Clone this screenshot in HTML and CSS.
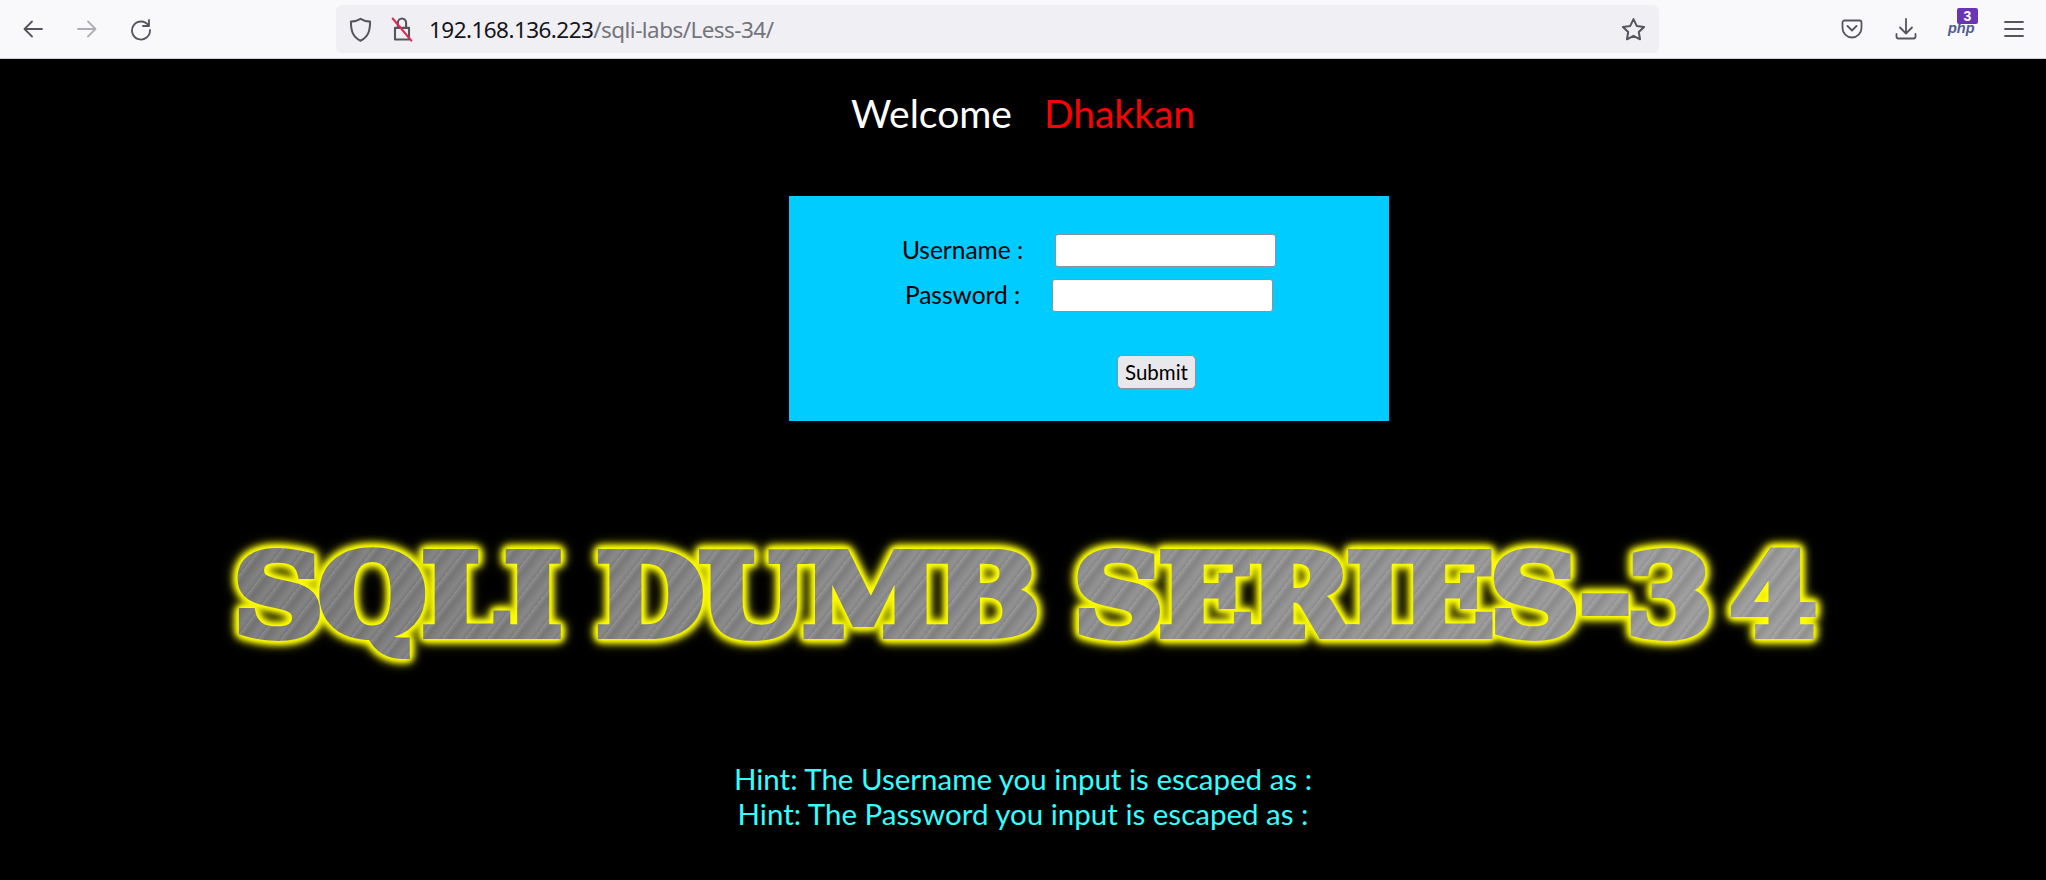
FILE: index.html
```html
<!DOCTYPE html>
<html lang="en">
<head>
  <meta charset="UTF-8">
  <title>Less-34</title>
  <link rel="stylesheet" href="styles.css">
</head>
<body>

  <!-- Browser toolbar -->
  <header class="toolbar">
    <div class="nav-buttons">
      <svg class="icon" viewBox="0 0 24 24"><path d="M21 12H4M11 4.500L3.500 12l7.500 7.500"/></svg>
      <svg class="icon icon-off" viewBox="0 0 24 24"><path d="M3 12h17M13 4.500l7.500 7.500-7.500 7.500"/></svg>
      <svg class="icon" viewBox="0 0 24 24"><path d="M19.500 8.500A9 9 0 1 0 21 13M20 3v6h-6"/></svg>
    </div>
    <div class="url-bar">
      <svg class="icon icon-shield" viewBox="0 0 24 24"><path d="M12 2.500c3 1.800 5.500 2.500 8.500 2.500 0 8-1.500 13.500-8.500 17C5 18.500 3.500 13 3.500 5 6.500 5 9 4.300 12 2.500z"/></svg>
      <svg class="icon icon-lock" viewBox="0 0 24 24"><path d="M6 11h12v10H6zM8.500 11V6.500a3.500 3.500 0 0 1 7 0V11"/><path class="lock-slash" d="M4 3l16 19"/></svg>
      <span class="url"><span class="url-host">192.168.136.223</span>/sqli-labs/Less-34/</span>
      <svg class="icon icon-star" viewBox="0 0 24 24"><path d="M12 2.800l2.900 6 6.500.9-4.700 4.500 1.100 6.500-5.800-3.100-5.800 3.100 1.100-6.500-4.700-4.500 6.500-.9z"/></svg>
    </div>
    <div class="tool-buttons">
      <svg class="icon" viewBox="0 0 24 24"><path d="M4.500 3.500h15a2 2 0 0 1 2 2V11a9.500 9.500 0 0 1-19 0V5.500a2 2 0 0 1 2-2z"/><path d="M7.500 9l4.500 4.500L16.500 9"/></svg>
      <svg class="icon" viewBox="0 0 24 24"><path d="M12 2v14M6 10.500l6 6 6-6M2.500 17v2.500a2 2 0 0 0 2 2h15a2 2 0 0 0 2-2V17"/></svg>
      <div class="php-ext">
        <span class="php-word">php</span>
        <span class="php-badge">3</span>
      </div>
      <svg class="icon" viewBox="0 0 24 24"><path d="M3 5h18M3 12h18M3 19h18"/></svg>
    </div>
  </header>

  <main class="page">
    <div class="welcome">Welcome <span class="name">Dhakkan</span></div>

    <form class="login-box" onsubmit="return false">
      <div class="form-row">
        <label for="uname">Username :</label>
        <input id="uname" type="text">
      </div>
      <div class="form-row form-row-pass">
        <label for="passwd">Password :</label>
        <input id="passwd" type="password">
      </div>
      <div class="submit-row">
        <button type="submit">Submit</button>
      </div>
    </form>

    <div class="banner"><span class="banner-text">SQLI DUMB SERIES-3<span class="banner-last">4</span></span></div>

    <div class="hints">
      <div>Hint: The Username you input is escaped as :</div>
      <div>Hint: The Password you input is escaped as :</div>
    </div>
  </main>

</body>
</html>
```

FILE: styles.css
```css
body {
  margin: 0;
  height: 880px;
  overflow: hidden;
  background-color: #000;
  font-family: 'Lato', 'Noto Sans', sans-serif;
}

/* Toolbar */
.toolbar {
  display: flex;
  align-items: center;
  height: 58px;
  background-color: #f9f9fb;
  border-bottom: 1px solid #d0d0d4;
}

.icon {
  width: 24px;
  height: 24px;
  fill: none;
  stroke: #55555f;
  stroke-width: 1.800;
  stroke-linecap: round;
  stroke-linejoin: round;
  flex: none;
}

.icon-off {
  opacity: 0.45;
}

.nav-buttons {
  display: flex;
  gap: 30px;
  width: 336px;
  padding-left: 21px;
  box-sizing: border-box;
}

.url-bar {
  display: flex;
  align-items: center;
  width: 1323px;
  height: 48px;
  padding: 0 12px 0 11px;
  box-sizing: border-box;
  background-color: #f0f0f4;
  border-radius: 6px;
}

.icon-shield {
  width: 27px;
  height: 27px;
}

.icon-lock {
  width: 28px;
  height: 28px;
  margin-left: 14px;
}

.lock-slash {
  stroke: #e22850;
}

.url {
  margin-left: 13px;
  flex: 1;
  font-family: 'Noto Sans', sans-serif;
  font-size: 22.500px;
  letter-spacing: -0.550px;
  color: #74747c;
}

.url-host {
  color: #15141a;
}

.icon-star {
  width: 27px;
  height: 27px;
}

.tool-buttons {
  display: flex;
  align-items: center;
  gap: 30px;
  margin-left: 181px;
}

.php-ext {
  position: relative;
  width: 24px;
  height: 24px;
}

.php-word {
  position: absolute;
  left: 0;
  top: 5px;
  font-family: 'Liberation Sans', sans-serif;
  font-size: 14.500px;
  font-weight: bold;
  font-style: italic;
  line-height: 13px;
  color: #4f5b93;
}

.php-badge {
  position: absolute;
  left: 9px;
  top: -9px;
  width: 21px;
  height: 16px;
  border-radius: 2px;
  background-color: #6a35b5;
  color: #fff;
  font-family: 'Liberation Sans', sans-serif;
  font-size: 14px;
  font-weight: bold;
  line-height: 16px;
  text-align: center;
}

/* Page */
.welcome {
  padding-top: 29px;
  height: 50px;
  line-height: 50px;
  text-align: center;
  font-size: 39px;
  color: #fff;
}

.name {
  margin-left: 22px;
  color: #f00;
}

.login-box {
  width: 600px;
  height: 225px;
  margin: 58px 0 0 789px;
  padding-top: 38px;
  box-sizing: border-box;
  background-color: #0cf;
  font-size: 24.500px;
  color: #000;
}

.form-row {
  display: flex;
  justify-content: center;
  align-items: center;
  gap: 32px;
  height: 33px;
}

.form-row label {
  margin-top: -3px;
}

.form-row-pass {
  margin-top: 12px;
}

.form-row input {
  width: 221px;
  height: 33px;
  padding: 0;
  box-sizing: border-box;
  background-color: #fff;
  border: 1px solid #8f8f9d;
  border-radius: 3px;
}

.submit-row {
  margin: 43px 0 0 328px;
}

.submit-row button {
  width: 79px;
  height: 34px;
  padding: 0;
  background-color: #e9e9ed;
  border: 1px solid #8f8f9d;
  border-radius: 5px;
  font-family: 'Lato', 'Noto Sans', sans-serif;
  font-size: 20.500px;
  color: #000;
}

.banner {
  height: 130px;
  margin-top: 110px;
  text-align: center;
  white-space: nowrap;
}

.banner-text {
  display: inline-block;
  padding: 0 6px;
  font-family: 'DejaVu Serif', serif;
  font-weight: bold;
  font-size: 112px;
  line-height: 130px;
  letter-spacing: -4px;
  color: transparent;
  -webkit-text-stroke: 8px transparent;
  background:
    repeating-linear-gradient(125deg, rgba(255, 255, 255, 0.10) 0, rgba(255, 255, 255, 0) 2px, rgba(0, 0, 0, 0.10) 5px, rgba(255, 255, 255, 0.03) 13px, rgba(0, 0, 0, 0.06) 17px),
    linear-gradient(90deg, #7e7e7e, #a0a0a0);
  -webkit-background-clip: text;
  background-clip: text;
  transform: scaleX(1.104);
  filter: drop-shadow(0 0 2px #ff0) drop-shadow(0 0 3px #ff0) drop-shadow(0 0 3px #ff0) drop-shadow(0 0 4px #cc0);
}

.banner-last {
  margin-left: 20px;
}

.hints {
  margin-top: 100px;
  text-align: center;
  font-size: 29.500px;
  line-height: 35px;
  color: #3ff;
}
```
